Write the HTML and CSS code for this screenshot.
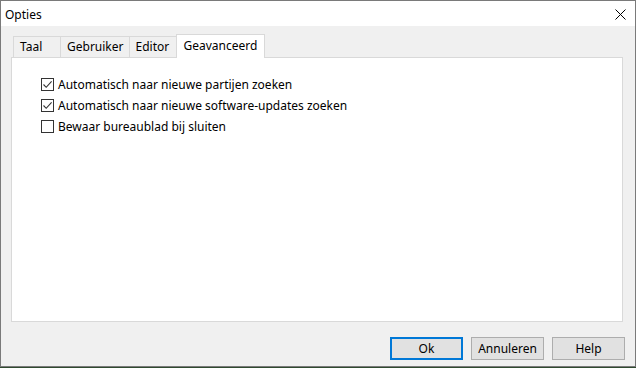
FILE: index.html
```html
<!DOCTYPE html>
<html lang="nl">
<head>
  <meta charset="UTF-8">
  <title>Opties</title>
  <link rel="stylesheet" href="styles.css">
</head>
<body>
  <div class="dlg">
    <!-- Titelbalk -->
    <div class="dlg-title">
      <span class="dlg-title-text">Opties</span>
      <span class="dlg-close" title="Sluiten">
        <svg width="11" height="11" viewBox="0 0 11 11"><path d="M0.5 0.5 L10.5 10.5 M10.5 0.5 L0.5 10.5" stroke="#000" stroke-width="1" fill="none"/></svg>
      </span>
    </div>
    <div class="dlg-body">
      <!-- Tabbladen -->
      <div class="tabs">
        <div class="tab">Taal</div>
        <div class="tab">Gebruiker</div>
        <div class="tab">Editor</div>
        <div class="tab active">Geavanceerd</div>
      </div>
      <div class="tab-panel">
        <label class="chk-row">
          <span class="chk">
            <svg width="11" height="11" viewBox="0 0 11 11"><path d="M1.5 5.5 L4.2 8.3 L9.6 2.4" stroke="#333" stroke-width="1.1" fill="none"/></svg>
          </span>
          <span>Automatisch naar nieuwe partijen zoeken</span>
        </label>
        <label class="chk-row">
          <span class="chk">
            <svg width="11" height="11" viewBox="0 0 11 11"><path d="M1.5 5.5 L4.2 8.3 L9.6 2.4" stroke="#333" stroke-width="1.1" fill="none"/></svg>
          </span>
          <span>Automatisch naar nieuwe software-updates zoeken</span>
        </label>
        <label class="chk-row">
          <span class="chk"></span>
          <span>Bewaar bureaublad bij sluiten</span>
        </label>
      </div>
      <!-- Knoppen -->
      <div class="dlg-buttons">
        <button class="btn default">Ok</button>
        <button class="btn">Annuleren</button>
        <button class="btn">Help</button>
      </div>
    </div>
  </div>
</body>
</html>
```

FILE: styles.css
```css
* {
  box-sizing: border-box;
}
body {
  margin: 0;
  background: #2f4a30;
  font-family: 'Noto Sans', 'Segoe UI', Arial, sans-serif;
  font-size: 12px;
  color: #000;
}
.dlg {
  width: 636px;
  height: 367px;
  border: 1px solid #7a7a7a;
  background: #f0f0f0;
  display: flex;
  flex-direction: column;
}
.dlg-title {
  height: 25px;
  flex-shrink: 0;
  background: #fff;
  display: flex;
  align-items: center;
  justify-content: space-between;
  padding: 0 9px 0 4px;
}
.dlg-title-text {
  margin-top: 1px;
}
.dlg-close {
  display: flex;
  margin-top: 1px;
}
.dlg-body {
  flex: 1;
  display: flex;
  flex-direction: column;
  padding: 8px 10px 0 10px;
}
/* Tabbladen */
.tabs {
  display: flex;
  align-items: flex-end;
  height: 23px;
  flex-shrink: 0;
  padding-left: 2px;
  position: relative;
  z-index: 2;
}
.tab {
  min-width: 47px;
  height: 21px;
  line-height: 20px;
  padding: 0 5px 0 6px;
  border: 1px solid #d9d9d9;
  border-bottom: none;
  border-right: none;
  background: #f0f0f0;
}
.tab.active {
  height: 24px;
  line-height: 21px;
  background: #fff;
  border-right: 1px solid #d9d9d9;
  padding: 0 7px 0 7px;
  margin-bottom: -1px;
}
.tab-panel {
  height: 265px;
  flex-shrink: 0;
  margin-right: 2px;
  background: #fff;
  border: 1px solid #d9d9d9;
  padding: 16px 0 0 29px;
  display: flex;
  flex-direction: column;
}
.chk-row {
  display: flex;
  align-items: center;
  gap: 4px;
  height: 21px;
}
.chk {
  width: 13px;
  height: 13px;
  border: 1px solid #333;
  background: #fff;
  display: flex;
}
/* Knoppen */
.dlg-buttons {
  display: flex;
  justify-content: flex-end;
  gap: 8px;
  margin-top: 15px;
}
.btn {
  width: 73px;
  height: 23px;
  background: #e1e1e1;
  border: 1px solid #adadad;
  font-family: inherit;
  font-size: 12px;
  color: #000;
  padding: 0;
}
.btn.default {
  border: 2px solid #0078d7;
}
```
